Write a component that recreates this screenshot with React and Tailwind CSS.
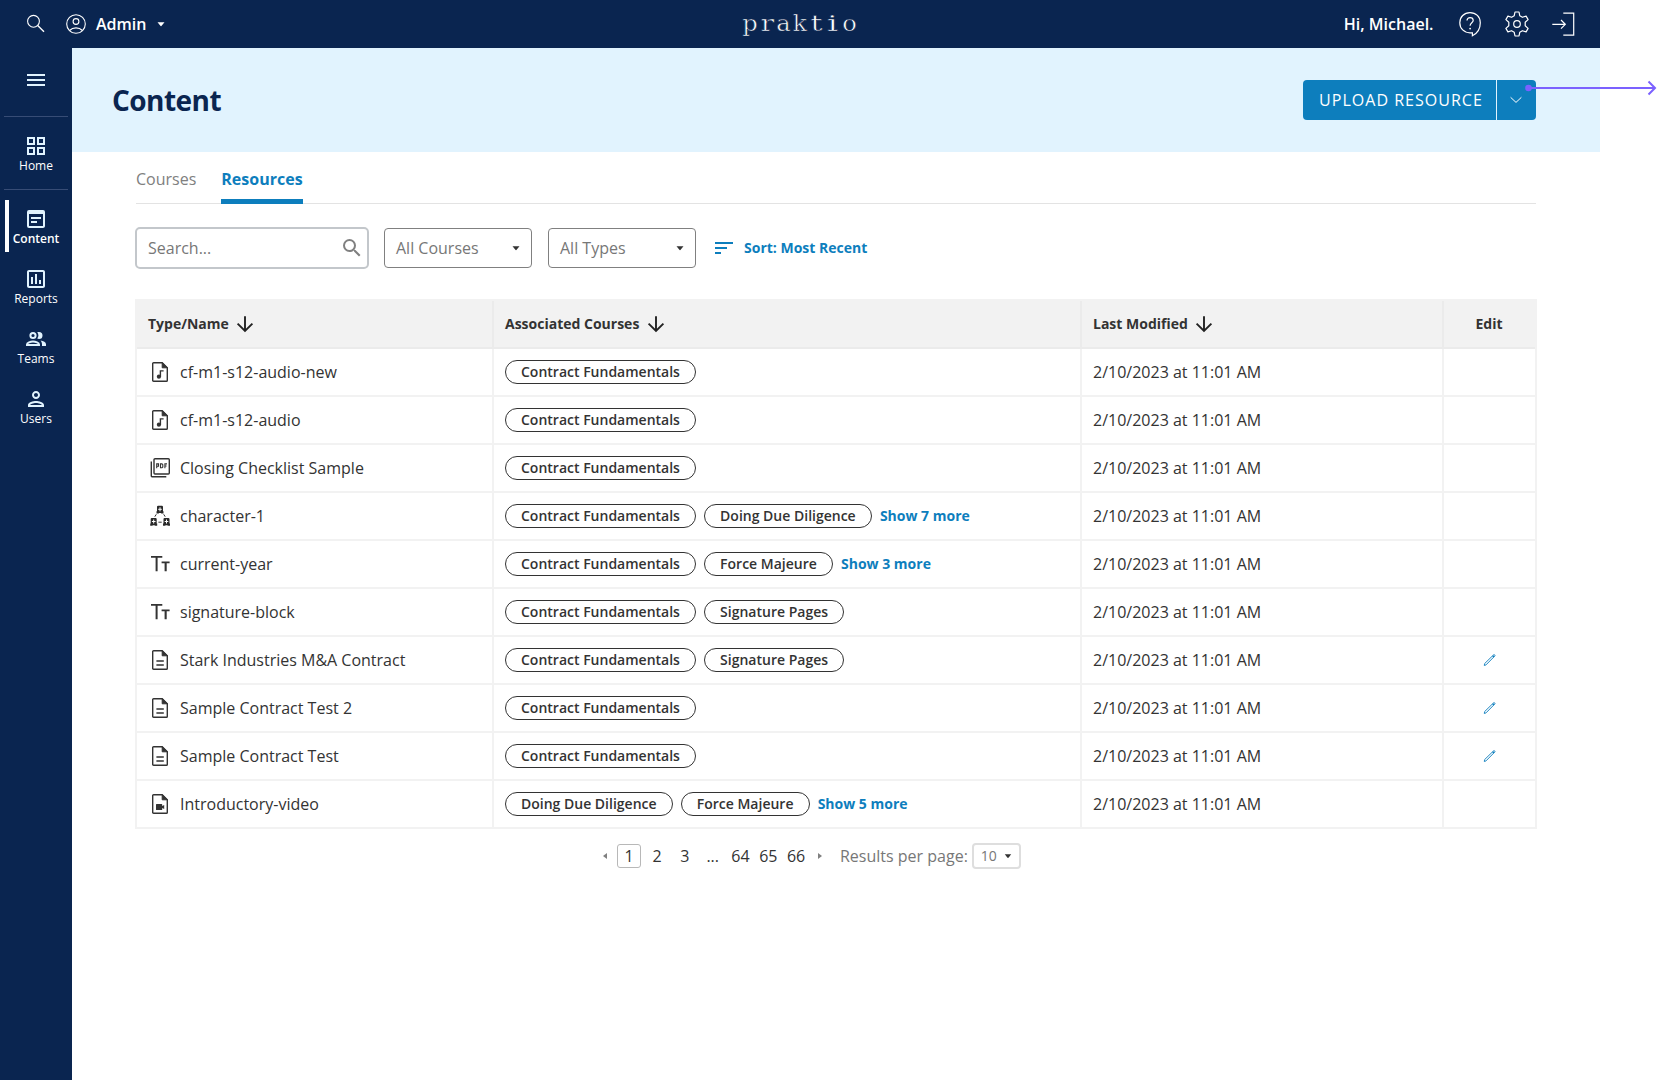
import React from "react";
import {
  MdOutlineGridView,
  MdWysiwyg,
  MdOutlineInsertChart,
  MdOutlinePerson,
  MdSearch,
  MdMenu,
  MdSort,
} from "react-icons/md";

const NAV = [
  { label: "Content", Icon: MdWysiwyg, active: true },
  { label: "Reports", Icon: MdOutlineInsertChart },
  { label: "Teams", Icon: TeamIcon },
  { label: "Users", Icon: MdOutlinePerson },
];

const LOGO = [
  ["p", "scale-x-[1.1]"],
  ["r", "scale-x-[1.3]"],
  ["a", "scale-x-[1.1]"],
  ["k", "scale-x-[1.05]"],
  ["t", "scale-x-[1.4]"],
  ["i", "scale-x-[1.7]"],
  ["o", "scale-x-[1.1]"],
];

const CF = "Contract Fundamentals";
const ROWS = [
  { type: "audio", name: "cf-m1-s12-audio-new", courses: [CF] },
  { type: "audio", name: "cf-m1-s12-audio", courses: [CF] },
  { type: "pdf", name: "Closing Checklist Sample", courses: [CF] },
  { type: "character", name: "character-1", courses: [CF, "Doing Due Diligence"], more: 7 },
  { type: "text", name: "current-year", courses: [CF, "Force Majeure"], more: 3 },
  { type: "text", name: "signature-block", courses: [CF, "Signature Pages"] },
  { type: "doc", name: "Stark Industries M&A Contract", courses: [CF, "Signature Pages"], edit: true },
  { type: "doc", name: "Sample Contract Test 2", courses: [CF], edit: true },
  { type: "doc", name: "Sample Contract Test", courses: [CF], edit: true },
  { type: "video", name: "Introductory-video", courses: ["Doing Due Diligence", "Force Majeure"], more: 5 },
];

function TeamIcon({ className }) {
  return (
    <svg className={className} viewBox="0 0 24 24" fill="none" stroke="currentColor" strokeWidth="2">
      <circle cx="9" cy="8.500" r="2.600" />
      <path d="M3 18v-.6c0-1.700 3.400-2.900 6-2.900s6 1.200 6 2.900v.6z" />
      <path d="M13.200 5.300c.6-.2 1.200-.3 1.800-.3a3.500 3.500 0 0 1 0 7c-.6 0-1.200-.1-1.800-.4.8-.9 1.200-2 1.200-3.100s-.4-2.300-1.200-3.200z" fill="currentColor" stroke="none" />
      <path d="M16.500 13.500c2.900.4 5.500 1.700 5.500 3.800V19h-4v-1.700c0-1.600-.6-2.900-1.500-3.800z" fill="currentColor" stroke="none" />
    </svg>
  );
}

function Caret({ className }) {
  return (
    <svg className={className} viewBox="0 0 24 24" fill="currentColor">
      <path d="M8.500 10.200h7l-2.700 3.400a1 1 0 0 1-1.600 0z" />
    </svg>
  );
}

function FileFrame({ children }) {
  return (
    <svg className="size-6" viewBox="0 0 24 24" fill="none" stroke="#333" strokeWidth="1.4">
      <path d="M5.600 2.700h8.600l5.100 5.100v12.600a.9.9 0 0 1-.9.9H5.600a.9.9 0 0 1-.9-.9V3.600a.9.9 0 0 1 .9-.9z" />
      <path d="M14.200 2.700v5.100h5.100z" fill="#333" strokeWidth="1" />
      {children}
    </svg>
  );
}

function Robot({ x, y }) {
  return (
    <g transform={`translate(${x} ${y})`}>
      <path d="M1.300 0h3.800a1.100 1.100 0 0 1 1.100 1.100v4.300h.5V7.800H4.300v-.6H2.100v.6H-.3V5.400h.5V1.100A1.100 1.100 0 0 1 1.300 0z" fill="#2a2a2a" />
      <path d="M3.200 1.500v4M1.400 3.500h3.600" stroke="#fff" strokeWidth="1" />
    </g>
  );
}

function TypeIcon({ type }) {
  if (type === "audio")
    return (
      <FileFrame>
        <circle cx="10.900" cy="16.700" r="2.100" fill="#333" stroke="none" />
        <path d="M12.400 16.900v-6h3.200" strokeWidth="1.400" />
      </FileFrame>
    );
  if (type === "doc")
    return (
      <FileFrame>
        <path d="M8.400 13h7.400M8.400 17h7.400" strokeWidth="1.300" />
      </FileFrame>
    );
  if (type === "video")
    return (
      <FileFrame>
        <path d="M8.600 12h5a.6.6 0 0 1 .6.6v1.400l2-1v4l-2-1v1.400a.6.6 0 0 1-.6.6h-5a.6.6 0 0 1-.6-.6v-4.800a.6.6 0 0 1 .6-.6z" fill="#333" stroke="none" />
      </FileFrame>
    );
  if (type === "pdf")
    return (
      <svg className="size-6" viewBox="0 0 24 24" fill="none" stroke="#333" strokeWidth="1.400">
        <rect x="6" y="2.700" width="15.300" height="15.300" rx="1" />
        <path d="M3.300 5.500v14.600a.7.7 0 0 0 .7.7h14.300" />
        <path d="M8.700 12.300V7.900h1.800v2.400H8.700M12.500 7.900h1.500l.8.8v2.300l-.8.8h-1.500zM16.900 12.300V7.900H19M16.900 10h1.700" strokeWidth="1.100" />
      </svg>
    );
  if (type === "text")
    return (
      <svg className="size-6" viewBox="0 0 24 24" fill="#333">
        <path d="M3 4h11.300v1.700H9.600v13.500H7.600V5.700H3zM13.600 9.400h8v1.900h-2.900v7.900h-2.100v-7.900h-3z" />
      </svg>
    );
  return (
    <svg className="size-6" viewBox="0 0 24 24">
      <Robot x={8.800} y={1.800} />
      <Robot x={2.500} y={14} />
      <Robot x={15.300} y={14} />
      <path d="M8.300 10.300l-1.500 2.400M15.700 10.300l1.500 2.400M10.400 18.200h3.300" stroke="#333" strokeWidth="1" fill="none" />
    </svg>
  );
}

function DownArrow() {
  return (
    <svg className="size-6" viewBox="0 0 24 24" fill="none" stroke="#222" strokeWidth="1.900">
      <path d="M12 4.200v14.800M4.600 11.600l7.400 7.400 7.400-7.400" />
    </svg>
  );
}

function HeadCell({ children }) {
  return (
    <div className="flex items-center gap-[4.500px] border-r-2 border-[#ebebeb] pl-[11px]">
      <span>{children}</span>
      <DownArrow />
    </div>
  );
}

function Select({ children }) {
  return (
    <button className="flex h-10 w-[148px] items-center justify-between rounded border border-[#808080] pl-[11px] pr-[3px] text-base text-[#777]">
      <span>{children}</span>
      <Caret className="size-6 text-[#333]" />
    </button>
  );
}

function NavItem({ label, Icon, active }) {
  return (
    <div className="relative flex h-[60px] flex-col items-center pt-[5px]">
      {active && <span className="absolute left-[5px] top-[-2px] h-[52px] w-1 bg-white" />}
      <Icon className="size-6 text-[#e1f3fe]" />
      <span className={active ? "-mt-px text-xs font-semibold leading-[18px] text-white" : "-mt-px text-xs leading-[18px] text-white"}>{label}</span>
    </div>
  );
}

function Header() {
  return (
    <header className="grid h-12 grid-cols-3 items-center bg-[#0a2550] text-white">
      <div className="flex items-center pl-6">
        <svg className="size-6" viewBox="0 0 24 24" fill="none" stroke="currentColor" strokeWidth="1.100">
          <circle cx="9.500" cy="9.300" r="5.900" />
          <path d="M13.700 13.600l6.300 6.200" strokeWidth="1.400" />
        </svg>
        <svg className="ml-4 size-6" viewBox="0 0 24 24" fill="none" stroke="currentColor" strokeWidth="1.100">
          <circle cx="12" cy="12" r="9.300" />
          <circle cx="12" cy="9.500" r="2.900" />
          <path d="M5.600 18.500c1.700-1.800 4-2.600 6.400-2.600s4.700.8 6.400 2.600" />
        </svg>
        <span className="ml-2 text-base font-semibold">Admin</span>
        <Caret className="ml-[3px] size-6" />
      </div>
      <div className="flex justify-center">
        <span className="flex font-['DejaVu_Serif',serif] text-[22px] leading-8 [-webkit-text-stroke:0.55px_#0a2550]">
          {LOGO.map(([letter, stretch], i) => (
            <span key={i} className="flex w-[16.500px] justify-center">
              <span className={stretch}>{letter}</span>
            </span>
          ))}
        </span>
      </div>
      <div className="flex items-center justify-end pr-[24px]">
        <span className="text-base font-semibold">Hi, Michael.</span>
        <svg className="ml-[22.500px] size-7" viewBox="0 0 28 28" fill="none" stroke="currentColor" strokeWidth="1.200">
          <path d="M14 2.600c-5.900 0-10.200 4.300-10.200 10.100S8.100 22.800 14 22.800h2.400v3c4.700-2.400 7.900-7.600 7.900-13.100 0-5.900-4.400-10.100-10.300-10.100z" />
          <path d="M11 10.600c0-1.800 1.300-3 3.100-3s3.100 1.200 3.100 2.800c0 2.300-3.100 2.400-3.100 5.300" />
          <circle cx="14.100" cy="18.600" r=".9" fill="currentColor" stroke="none" />
        </svg>
        <svg className="ml-[19px] size-7" viewBox="0 0 28 28" fill="none" stroke="currentColor" strokeWidth="1.200" strokeLinejoin="round">
          <circle cx="14" cy="14" r="3.300" />
          <path d="M12 2h4l.8 3.800 2.600 1.500 3.700-1.200 2 3.500-2.900 2.600v3.600l2.900 2.600-2 3.500-3.700-1.200-2.600 1.500L16 26h-4l-.8-3.800-2.600-1.500-3.700 1.200-2-3.500 2.900-2.600v-3.600L2.900 9.600l2-3.500 3.700 1.200 2.600-1.500z" />
        </svg>
        <svg className="ml-[21px] size-6" viewBox="0 0 24 24" fill="none" stroke="currentColor" strokeWidth="1.200">
          <path d="M11.300 1.200h10.400v22H11.300M.3 12.300h13M9 8l4.300 4.300L9 16.600" />
        </svg>
      </div>
    </header>
  );
}

function Sidebar() {
  return (
    <nav className="flex w-[72px] shrink-0 flex-col bg-[#0a2550]">
      <div className="flex h-[68px] justify-center pt-5">
        <MdMenu className="size-6 text-[#e1f3fe]" />
      </div>
      <div className="mx-1 h-px bg-[#374c75]" />
      <div className="flex h-[72px] flex-col items-center pt-[17px]">
        <MdOutlineGridView className="size-6 text-[#e1f3fe]" />
        <span className="-mt-px text-xs leading-[18px] text-white">Home</span>
      </div>
      <div className="mx-1 mb-3 h-px bg-[#374c75]" />
      {NAV.map((n) => (
        <NavItem key={n.label} {...n} />
      ))}
    </nav>
  );
}

function ResourceTable() {
  return (
    <div className="mt-[30px] w-[1402px] border-2 border-b-0 border-[#f2f2f2]">
      <div className="grid h-12 grid-cols-[357px_588px_362px_91px] border-b-2 border-[#ebebeb] bg-[#f2f2f2] text-sm font-bold text-[#333]">
        <HeadCell>Type/Name</HeadCell>
        <HeadCell>Associated Courses</HeadCell>
        <HeadCell>Last Modified</HeadCell>
        <div className="flex items-center justify-center pr-px">Edit</div>
      </div>
      {ROWS.map((r) => (
        <div key={r.name} className="grid h-12 grid-cols-[357px_588px_362px_91px] border-b-2 border-[#f2f2f2] text-base text-[#333]">
          <div className="flex items-center gap-2 border-r-2 border-[#f2f2f2] pl-[11px]">
            <TypeIcon type={r.type} />
            <span>{r.name}</span>
          </div>
          <div className="flex items-center gap-2 border-r-2 border-[#f2f2f2] pl-[11px] text-sm">
            {r.courses.map((c) => (
              <span key={c} className="h-6 rounded-full border border-[#333] pl-[15px] pr-[15.200px] font-semibold leading-[22px]">{c}</span>
            ))}
            {r.more && <a className="font-bold text-[#0d7ebd]">Show {r.more} more</a>}
          </div>
          <div className="flex items-center border-r-2 border-[#f2f2f2] pl-[11px]">2/10/2023 at 11:01 AM</div>
          <div className="flex items-center justify-center">
            {r.edit && (
              <svg className="size-4" viewBox="0 0 16 16" fill="none" stroke="#0d7ebd" strokeWidth=".9">
                <path d="M2.300 13.500l.3-1.900 8.900-8.700c.4-.4.800-.3 1.200 0s.4.800 0 1.200l-8.700 8.800z" />
                <path d="M10.700 3.700l1.300 1.300" strokeWidth="1.400" />
              </svg>
            )}
          </div>
        </div>
      ))}
    </div>
  );
}

function Pagination() {
  return (
    <div className="mt-[14px] flex h-[26px] items-center pl-[468px] text-base text-[#333]">
      <span className="h-0 w-0 border-y-[3px] border-r-[4px] border-y-transparent border-r-[#808080]" />
      <span className="ml-[10px] flex h-6 w-6 items-center justify-center rounded-[3px] border border-[#b8b8b8]">1</span>
      {["2", "3", "...", "64", "65", "66"].map((p, i) => (
        <span key={p} className={i === 0 ? "ml-[2px] w-[28px] text-center" : "w-[27.800px] text-center"}>{p}</span>
      ))}
      <span className="ml-[8px] h-0 w-0 border-y-[3px] border-l-[4px] border-y-transparent border-l-[#808080]" />
      <span className="ml-[18px] text-[#777]">Results per page:</span>
      <span className="ml-1 flex h-[26px] w-[49px] items-center justify-between rounded border-2 border-[#dedede] pl-[7px] text-sm text-[#777]">
        10
        <Caret className="size-[22px] text-[#333]" />
      </span>
    </div>
  );
}

export default function App() {
  return (
    <div className="h-[1080px] w-[1662px] overflow-hidden bg-white font-['Open_Sans',sans-serif]">
      <div className="flex h-full w-[1600px] flex-col">
        <Header />
        <div className="flex flex-1">
          <Sidebar />
          <main className="flex-1">
            <section className="flex h-[104px] items-center justify-between bg-[#e1f3fe] pl-10 pr-16">
              <h1 className="text-[28px] font-bold tracking-[-0.550px] text-[#0a2550]">Content</h1>
              <div className="relative flex h-10 text-white">
                <button className="w-[193px] rounded-l-sm bg-[#0d7ebd] pl-[3px] text-base font-medium tracking-[1.020px]">UPLOAD RESOURCE</button>
                <button className="ml-px flex w-[39px] items-center justify-center rounded-r-sm bg-[#0d7ebd] pr-px">
                  <svg className="size-4" viewBox="0 0 16 16" fill="none" stroke="currentColor" strokeWidth="1">
                    <path d="M2.600 5.300L8 10.400l5.400-5.100" />
                  </svg>
                </button>
                <svg className="absolute left-[222px] top-0 h-4 w-[132px]" viewBox="0 0 132 16" fill="none" stroke="#7b61ff" strokeWidth="2">
                  <circle cx="3.500" cy="8" r="3.300" fill="#7b61ff" stroke="none" />
                  <path d="M3 8h127M123.500 1.500l6.500 6.500-6.500 6.500" />
                </svg>
              </div>
            </section>
            <div className="pl-[63px]">
              <div className="ml-px flex h-[52px] w-[1400px] gap-[25px] border-b border-[#e3e3e3] text-base">
                <span className="pt-[15px] text-[#808080]">Courses</span>
                <span className="-mb-px border-b-[5px] border-[#0d7ebd] pt-[15px] font-bold text-[#0d7ebd]">Resources</span>
              </div>
              <div className="mt-[23px] flex h-[42px] items-center gap-4">
                <div className="-mr-px flex h-[42px] w-[234px] items-center justify-between rounded-[5px] border-2 border-[#c3c7cb] pl-[11px] pr-[3px] text-base text-[#777]">
                  <span>Search...</span>
                  <MdSearch className="size-6 text-[#808080]" />
                </div>
                <Select>All Courses</Select>
                <Select>All Types</Select>
                <div className="flex items-center gap-2 text-sm font-bold text-[#0d7ebd]">
                  <MdSort className="size-6" />
                  <span>Sort: Most Recent</span>
                </div>
              </div>
              <ResourceTable />
              <Pagination />
            </div>
          </main>
        </div>
      </div>
    </div>
  );
}
